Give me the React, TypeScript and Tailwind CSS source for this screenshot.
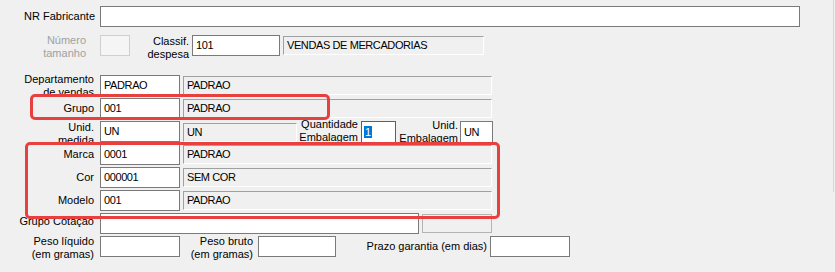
import React from "react";

function Input({ w, value, className = "" }: { w: string; value?: string; className?: string }) {
  return (
    <div className={`flex h-[21px] shrink-0 items-center border border-[#7a7a7a] bg-white pl-[3px] tracking-[-0.4px] ${w} ${className}`}>
      {value}
    </div>
  );
}

function Gray({ w, value }: { w: string; value?: string }) {
  return (
    <div
      className={`ml-[3px] flex h-[19px] shrink-0 items-center self-center border-t border-l border-b border-r border-t-[#a0a0a0] border-l-[#a0a0a0] border-b-white border-r-white bg-[#f0f0f0] pl-[3px] tracking-[-0.4px] ${w}`}
    >
      {value}
    </div>
  );
}

function RowField({ label, code, desc }: { label: string; code: string; desc: string }) {
  return (
    <div className="mt-[2px] flex h-[21px] items-center">
      <div className="w-[100px] shrink-0 pr-[6px] text-right">{label}</div>
      <Input w="w-[80px]" value={code} />
      <Gray w="w-[309px]" value={desc} />
    </div>
  );
}

export default function App() {
  return (
    <div className="relative h-[272px] w-[835px] overflow-hidden bg-[#f0f0f0] font-['Liberation_Sans',Arial,sans-serif] text-[11px] leading-[13px] text-black">
      <div className="flex flex-col pt-[6px]">
        {/* NR Fabricante */}
        <div className="flex h-[21px] items-center">
          <div className="w-[100px] shrink-0 pr-[5px] text-right">NR Fabricante</div>
          <Input w="w-[700px]" />
        </div>

        {/* Número tamanho / Classif. despesa */}
        <div className="mt-[8px] flex h-[21px] items-start">
          <div className="-mt-[1px] w-[100px] shrink-0 pr-[14px] text-right text-[#a0a0a0]">
            Número
            <br />
            tamanho
          </div>
          <div className="h-[21px] w-[30px] shrink-0 border border-[#cfcfcf] bg-[#f5f5f5]" />
          <div className="w-[62px] shrink-0 pr-[3px] text-right">
            Classif.
            <br />
            despesa
          </div>
          <Input w="w-[88px]" value="101" />
          <Gray w="w-[201px]" value="VENDAS DE MERCADORIAS" />
        </div>

        {/* Departamento de vendas */}
        <div className="mt-[19px] flex h-[21px] items-start">
          <div className="-mt-[2px] w-[100px] shrink-0 pr-[6px] text-right">
            Departamento
            <br />
            de vendas
          </div>
          <Input w="w-[80px]" value="PADRAO" />
          <Gray w="w-[309px]" value="PADRAO" />
        </div>

        {/* Grupo */}
        <div className="relative z-10 mt-[2px] flex h-[21px] items-center">
          <div className="w-[100px] shrink-0 bg-[#f0f0f0] pr-[6px] text-right">Grupo</div>
          <Input w="w-[80px]" value="001" />
          <Gray w="w-[309px]" value="PADRAO" />
        </div>

        {/* Unid. medida / Quantidade Embalagem / Unid. Embalagem */}
        <div className="mt-[2px] flex h-[22px] items-start">
          <div className="w-[100px] shrink-0 pr-[6px] text-right">
            Unid.
            <br />
            medida
          </div>
          <Input w="w-[80px]" value="UN" />
          <Gray w="w-[114px]" value="UN" />
          <div className="-mt-[3px] w-[64px] shrink-0 pr-[3px] text-right">
            Quantidade
            <br />
            Embalagem
          </div>
          <div className="flex h-[22px] w-[35px] shrink-0 items-center border border-[#0078d7] bg-white pl-[2px]">
            <span className="bg-[#0078d7] px-[1px] leading-[12px] text-white">1</span>
          </div>
          <div className="-mt-[2px] w-[64px] shrink-0 pr-[2px] text-right">
            Unid.
            <br />
            Embalagem
          </div>
          <div className="flex h-[22px] w-[33px] shrink-0 items-center border border-[#7a7a7a] bg-white pl-[3px] tracking-[-0.4px]">
            UN
          </div>
        </div>

        <div className="-mt-[1px] flex flex-col">
          <RowField label="Marca" code="0001" desc="PADRAO" />
          <RowField label="Cor" code="000001" desc="SEM COR" />
          <RowField label="Modelo" code="001" desc="PADRAO" />
        </div>

        {/* Grupo Cotação */}
        <div className="mt-[2px] flex h-[21px] items-start">
          <div className="mt-[2px] w-[100px] shrink-0 pr-[6px] text-right">Grupo Cotação</div>
          <Input w="w-[319px]" />
          <div className="ml-[3px] h-[19px] w-[70px] shrink-0 self-center border border-[#b4b4b4] bg-[#f0f0f0]" />
        </div>

        {/* Peso */}
        <div className="mt-[2px] flex h-[21px] items-start">
          <div className="-mt-[1px] w-[100px] shrink-0 pr-[6px] text-right">
            Peso líquido
            <br />
            (em gramas)
          </div>
          <Input w="w-[80px]" />
          <div className="-mt-[1px] w-[78px] shrink-0 pr-[5px] text-right">
            Peso bruto
            <br />
            (em gramas)
          </div>
          <Input w="w-[78px]" />
          <div className="w-[154px] shrink-0 self-center pr-[3px] text-right">Prazo garantia (em dias)</div>
          <Input w="w-[80px]" />
        </div>
      </div>

      {/* red highlight frames */}
      <div className="pointer-events-none absolute left-[30px] top-[94px] z-20 h-[26px] w-[300px] rounded-[5px] border-[3px] border-[#e8403f]" />
      <div className="pointer-events-none absolute left-[25px] top-[142px] z-20 h-[77px] w-[475px] rounded-[5px] border-[3px] border-[#e8403f]" />

      {/* right edge line */}
      <div className="absolute left-[833px] top-0 h-[192px] w-[1px] bg-[#d8d8d8]" />
    </div>
  );
}
